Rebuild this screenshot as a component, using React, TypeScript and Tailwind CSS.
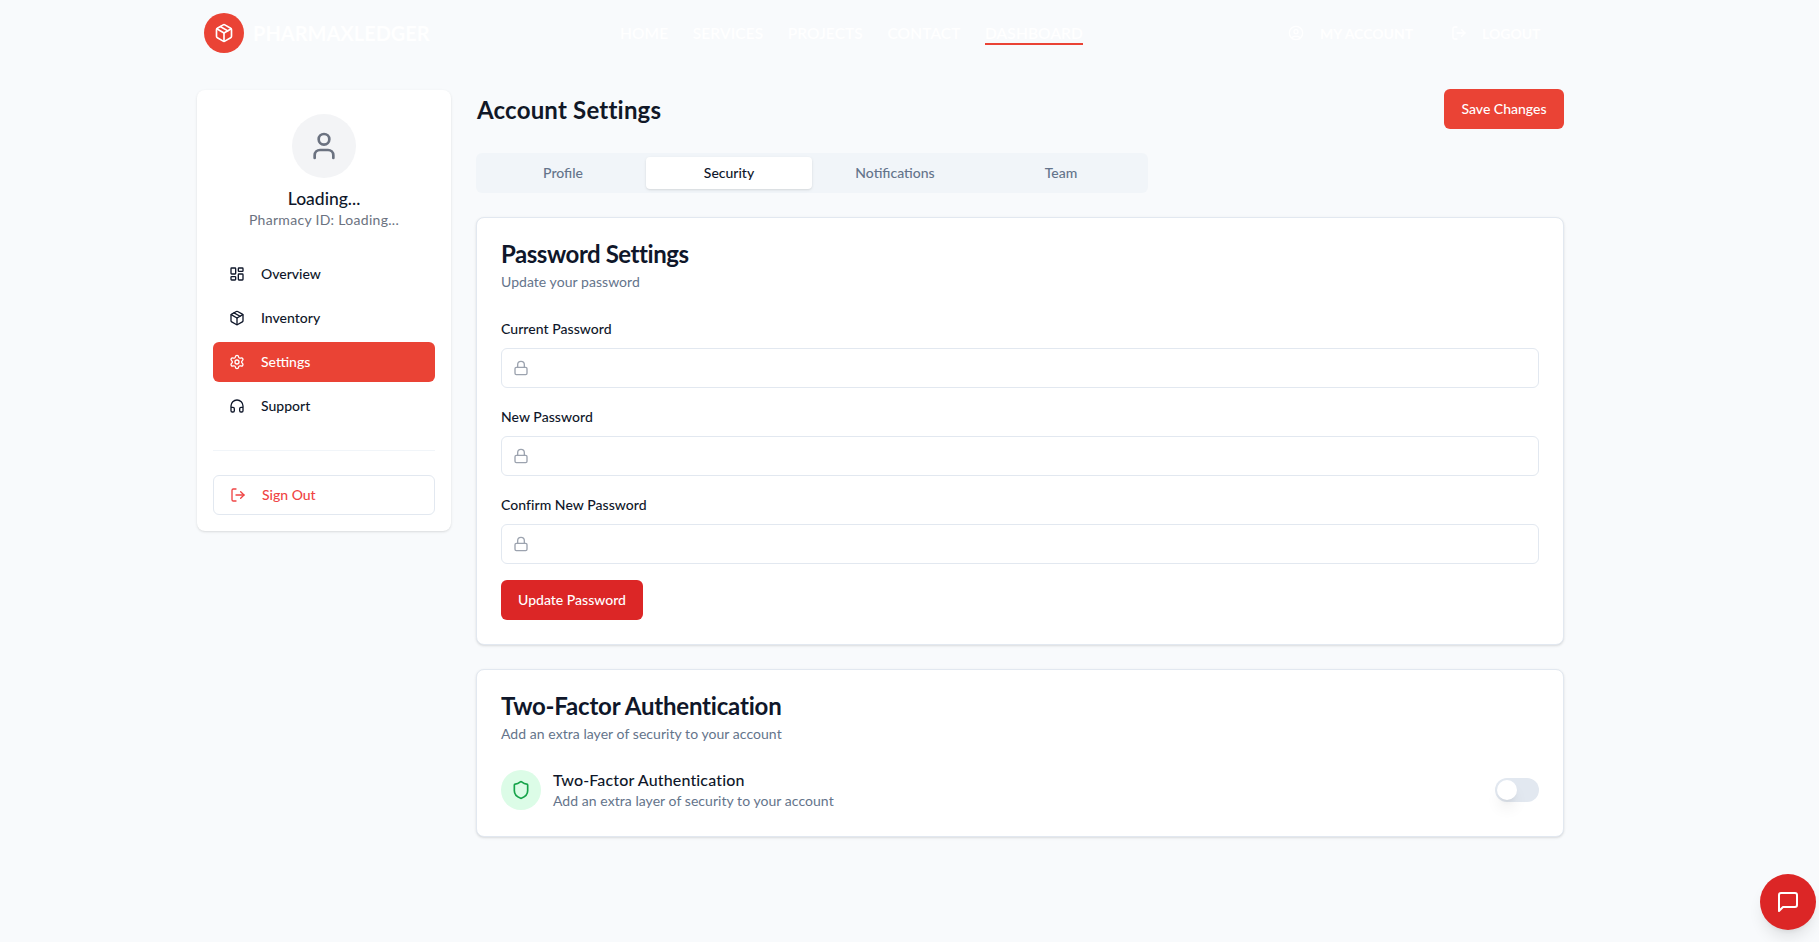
import { Package, LayoutDashboard, Settings, Headphones, LogOut, User, Lock, Shield, CircleUser } from "lucide-react";

const Field = ({ label }: { label: string }) => (
  <div className="flex flex-col">
    <label className="h-[20px] mb-[9px] text-[14px] leading-[20px] font-medium text-[#0f172a] tracking-[0.05px]">{label}</label>
    <div className="h-[40px] flex items-center pl-[11px] bg-white border border-[#e2e8f0] rounded-[6px]">
      <Lock size={16} className="text-[#9ca3af]" />
    </div>
  </div>
);

const navItems = [
  { label: "Overview", Icon: LayoutDashboard },
  { label: "Inventory", Icon: Package },
  { label: "Settings", Icon: Settings, active: true },
  { label: "Support", Icon: Headphones },
];

export default function App() {
  return (
    <div className="min-h-[942px] bg-[#f8fafc] text-[#0f172a] font-['Lato','Liberation_Sans',sans-serif] overflow-hidden">
      <header className="h-[66px] flex items-start text-white">
        <div className="ml-[204px] mt-[13px] w-[40px] h-[40px] rounded-full bg-[#ea4335] flex items-center justify-center">
          <Package size={20} />
        </div>
        <div className="ml-[9px] mt-[20px] text-[20px] leading-[26px] font-bold w-[178px] whitespace-nowrap">PHARMAXLEDGER</div>
        <nav className="ml-[189px] mt-[21px] w-[463px] flex justify-between font-semibold text-[15.5px] leading-[24px] tracking-[0.1px]">
          <span>HOME</span>
          <span>SERVICES</span>
          <span>PROJECTS</span>
          <span>CONTACT</span>
          <span className="relative">
            DASHBOARD
            <span className="absolute left-0 right-0 top-[22px] h-[2px] bg-[#ea4335]" />
          </span>
        </nav>
        <div className="ml-[205px] mt-[21px] flex items-center h-[24px] font-bold text-[14px]">
          <CircleUser size={16} />
          <span className="ml-[16px] w-[90px] whitespace-nowrap">MY ACCOUNT</span>
          <LogOut size={16} className="ml-[41px]" />
          <span className="ml-[15px]">LOGOUT</span>
        </div>
      </header>

      <div className="ml-[197px] mt-[24px] flex gap-[25px] items-start">
        <aside className="w-[254px] h-[441px] bg-white rounded-[8px] shadow-sm p-[16px] flex flex-col">
          <div className="flex flex-col items-center pt-[8px]">
            <div className="w-[64px] h-[64px] rounded-full bg-[#f3f4f6] flex items-center justify-center">
              <User size={32} className="text-[#6b7280]" />
            </div>
            <div className="mt-[9px] text-[17.5px] leading-[24px] font-medium">Loading...</div>
            <div className="mt-[-1px] text-[14px] leading-[20px] text-[#6b7280] tracking-[0.3px]">Pharmacy ID: Loading...</div>
          </div>
          <nav className="mt-[24px] flex flex-col gap-[4px]">
            {navItems.map(({ label, Icon, active }) => (
              <div
                key={label}
                className={`h-[40px] flex items-center pl-[16px] rounded-[6px] text-[14px] font-medium ${active ? "bg-[#ea4335] text-white" : "text-[#0f172a]"}`}
              >
                <Icon size={16} />
                <span className="ml-[16px] pb-[2px]">{label}</span>
              </div>
            ))}
          </nav>
          <div className="mt-[24px] border-t border-[#f1f5f9]" />
          <div className="mt-[24px] h-[40px] flex items-center pl-[16px] bg-white border border-[#e2e8f0] rounded-[6px] text-[14px] font-medium text-[#ef4444]">
            <LogOut size={16} />
            <span className="ml-[16px] pb-[2px]">Sign Out</span>
          </div>
        </aside>

        <main className="w-[1088px] flex flex-col">
          <div className="h-[40px] mt-[-1px] flex items-center justify-between">
            <h1 className="text-[24px] font-bold text-[#111827] tracking-[0.2px] pl-[1px] pt-[1px]">Account Settings</h1>
            <button className="h-[40px] w-[120px] pb-[2px] rounded-[6px] bg-[#ea4335] text-white text-[14px] font-medium">Save Changes</button>
          </div>
          <div className="mt-[24px] w-[672px] h-[40px] p-[4px] rounded-[6px] bg-[#f1f5f9] grid grid-cols-4 text-[14px] font-medium text-[#64748b]">
            <div className="flex items-center justify-center pb-[2px]">Profile</div>
            <div className="flex items-center justify-center pb-[2px] bg-white rounded-[4px] shadow-sm text-[#0f172a]">Security</div>
            <div className="flex items-center justify-center pb-[2px]">Notifications</div>
            <div className="flex items-center justify-center pb-[2px]">Team</div>
          </div>

          <section className="mt-[24px] h-[428px] bg-white border border-[#e2e8f0] rounded-[8px] shadow-sm p-[24px] pt-[20px]">
            <h2 className="text-[24px] leading-[32px] font-bold tracking-[-0.45px]">Password Settings</h2>
            <p className="mt-[2px] text-[14px] leading-[20px] text-[#64748b] tracking-[0.05px]">Update your password</p>
            <div className="mt-[27px] flex flex-col gap-[19px]">
              <Field label="Current Password" />
              <Field label="New Password" />
              <Field label="Confirm New Password" />
            </div>
            <button className="mt-[16px] h-[40px] w-[142px] pb-[2px] rounded-[6px] bg-[#dc2626] text-white text-[14px] font-medium">Update Password</button>
          </section>

          <section className="mt-[24px] h-[168px] bg-white border border-[#e2e8f0] rounded-[8px] shadow-sm p-[24px] pt-[20px]">
            <h2 className="text-[24px] leading-[32px] font-bold tracking-[-0.2px]">Two-Factor Authentication</h2>
            <p className="mt-[2px] text-[14px] leading-[20px] text-[#64748b] tracking-[0.05px]">Add an extra layer of security to your account</p>
            <div className="mt-[25px] flex items-center">
              <div className="w-[40px] h-[40px] rounded-full bg-[#dcfce7] flex items-center justify-center">
                <Shield size={20} className="text-[#16a34a]" />
              </div>
              <div className="ml-[12px] flex-1">
                <div className="text-[16px] leading-[22px] font-medium tracking-[0.15px]">Two-Factor Authentication</div>
                <div className="text-[14px] leading-[20px] text-[#64748b] tracking-[0.05px]">Add an extra layer of security to your account</div>
              </div>
              <div className="w-[44px] h-[24px] rounded-full bg-[#e2e8f0] p-[2px]">
                <div className="w-[20px] h-[20px] rounded-full bg-white shadow-lg" />
              </div>
            </div>
          </section>
        </main>
      </div>

      <button className="fixed right-[3px] bottom-[12px] w-[56px] h-[56px] rounded-full bg-[#dc2626] shadow-lg text-white flex items-center justify-center">
        <svg width="24" height="24" viewBox="0 0 24 24" fill="none" stroke="currentColor" strokeWidth="2" strokeLinecap="round" strokeLinejoin="round">
          <path d="M21 15a2 2 0 0 1-2 2H7l-4 4V5a2 2 0 0 1 2-2h14a2 2 0 0 1 2 2z" />
        </svg>
      </button>
    </div>
  );
}
